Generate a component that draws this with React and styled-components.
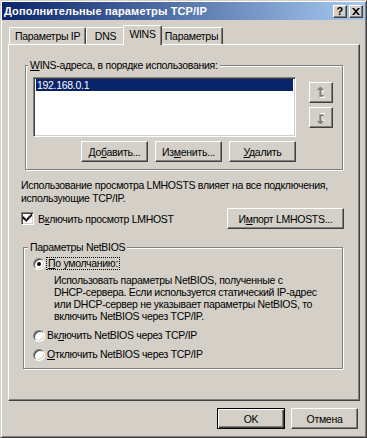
import React from "react";
import styled, { createGlobalStyle, css } from "styled-components";

const FACE = "#d4d0c8";
const FONT = `"Liberation Sans", Arial, sans-serif`;

const Global = createGlobalStyle`
  html, body { margin: 0; padding: 0; background: ${FACE}; }
  body { font-family: ${FONT}; font-size: 10.5px; letter-spacing: -0.3px; color: #000; }
  * { box-sizing: border-box; }
`;

const raised = css`
  border: 1px solid;
  border-color: #fff #404040 #404040 #fff;
  box-shadow: inset -1px -1px #808080;
`;

const sunken = css`
  border: 1px solid;
  border-color: #808080 #fff #fff #808080;
  box-shadow: inset 1px 1px #404040, inset -1px -1px ${FACE};
`;

const Window = styled.div`
  width: 367px;
  height: 438px;
  background: ${FACE};
  border: 1px solid;
  border-color: ${FACE} #404040 #404040 ${FACE};
  box-shadow: inset 1px 1px #fff, inset -1px -1px #808080;
  padding: 1px;
  display: flex;
  flex-direction: column;
`;

const TitleBar = styled.div`
  flex: none;
  height: 18px;
  display: flex;
  align-items: center;
  justify-content: space-between;
  padding: 0 2px 0 2px;
  background: linear-gradient(to right, #0a246a, #a6caf0);
  color: #fff;
  font-weight: bold;
  font-size: 11px;
  letter-spacing: 0.15px;
  white-space: nowrap;
`;

const TitleButtons = styled.div`
  display: flex;
  gap: 2px;
`;

const TitleButton = styled.div`
  width: 14px;
  height: 13px;
  ${raised};
  background: ${FACE};
  display: flex;
  align-items: center;
  justify-content: center;
  color: #000;
  font: bold 11px ${FONT};
  line-height: 1;
`;

const Body = styled.div`
  flex: 1;
  display: flex;
  flex-direction: column;
  padding: 0 5px 0 6px;
`;

const TabStrip = styled.div`
  flex: none;
  height: 24px;
  display: flex;
  align-items: flex-end;
  padding-left: 1px;
`;

const Tab = styled.div`
  position: relative;
  z-index: ${(p) => (p.$active ? 2 : 1)};
  flex: none;
  width: ${(p) => p.$w}px;
  height: ${(p) => (p.$active ? 20 : 17)}px;
  margin: 0 ${(p) => (p.$active ? -2 : 0)}px ${(p) => (p.$active ? -1 : 0)}px;
  background: ${FACE};
  border-top: 1px solid #fff;
  border-left: 1px solid #fff;
  border-right: 1px solid #404040;
  border-radius: 2px 2px 0 0;
  box-shadow: inset -1px 0 #808080;
  text-align: center;
  padding-top: 2px;
  line-height: 13px;
  white-space: nowrap;
`;

const Panel = styled.div`
  flex: none;
  height: 357px;
  border: 1px solid;
  border-color: #fff #404040 #404040 #fff;
  box-shadow: inset -1px -1px #808080;
  padding: 14px 15px 0 12px;
  display: flex;
  flex-direction: column;
`;

const Group = styled.fieldset`
  margin: ${(p) => p.$mt}px 1px 0 ${(p) => p.$ml}px;
  padding: ${(p) => p.$pad};
  border: 1px solid #808080;
  box-shadow: inset 1px 1px #fff, 1px 1px #fff;
  min-width: 0;
`;

const Legend = styled.legend`
  margin-left: -5px;
  padding: 0 2px;
  line-height: 13px;
  background: ${FACE};
  white-space: nowrap;
`;

const U = styled.span`
  text-decoration: underline;
`;

const AddrRow = styled.div`
  display: flex;
  gap: 13px;
`;

const AddrColumn = styled.div`
  display: flex;
  flex-direction: column;
  gap: 4px;
`;

const ListBox = styled.div`
  width: 263px;
  height: 60px;
  background: #fff;
  ${sunken};
  padding: 1px 2px;
`;

const ListItem = styled.div`
  height: 12px;
  line-height: 12px;
  padding-left: 1px;
  background: ${(p) => (p.$selected ? "#0a246a" : "transparent")};
  color: ${(p) => (p.$selected ? "#fff" : "#000")};
`;

const ArrowColumn = styled.div`
  display: flex;
  flex-direction: column;
  gap: 4px;
  padding-top: 5px;
`;

const Button = styled.button`
  flex: none;
  width: ${(p) => p.$w}px;
  height: ${(p) => p.$h || 21}px;
  padding: 0;
  background: ${FACE};
  ${raised};
  font: 10.5px ${FONT};
  letter-spacing: -0.3px;
  color: #000;
  display: flex;
  align-items: center;
  justify-content: center;
  white-space: nowrap;
  ${(p) =>
    p.$default &&
    css`
      border: 1px solid #000;
      box-shadow: inset 1px 1px #fff, inset -1px -1px #404040,
        inset -2px -2px #808080;
    `}
`;

const ButtonRow = styled.div`
  display: flex;
  justify-content: flex-end;
  gap: ${(p) => p.$gap}px;
`;

const Paragraph = styled.p`
  margin: ${(p) => p.$mt}px 0 0 0;
  line-height: ${(p) => p.$lh}px;
  padding-left: ${(p) => p.$pl || 0}px;
  white-space: nowrap;
`;

const CheckRow = styled.div`
  display: flex;
  align-items: center;
  justify-content: space-between;
  margin-top: 3px;
`;

const OptionLabel = styled.label`
  display: flex;
  align-items: center;
  gap: 4px;
  white-space: nowrap;
`;

const CheckBox = styled.span`
  flex: none;
  width: 13px;
  height: 13px;
  background: #fff;
  ${sunken};
  display: flex;
  align-items: center;
  justify-content: center;
`;

const Radio = styled.span`
  flex: none;
  width: 12px;
  height: 12px;
  border-radius: 50%;
  background: #fff;
  border: 1px solid;
  border-color: #808080 #fff #fff #808080;
  box-shadow: inset 1px 1px #404040, inset -1px -1px ${FACE};
  display: flex;
  align-items: center;
  justify-content: center;
  &::after {
    content: "";
    width: 4px;
    height: 4px;
    border-radius: 50%;
    background: ${(p) => (p.$checked ? "#000" : "transparent")};
  }
`;

const RadioRow = styled(OptionLabel)`
  margin-top: ${(p) => p.$mt}px;
  line-height: 13px;
  height: 13px;
  gap: ${(p) => (p.$focus ? 1 : 2)}px;
`;

const FocusText = styled.span`
  border: 1px dotted #000;
  padding: 0 1px;
  line-height: 11px;
`;

const Footer = styled.div`
  display: flex;
  justify-content: flex-end;
  gap: 6px;
  padding: 7px 2px 0 0;
`;

const ArrowIcon = styled.svg`
  flex: none;
  width: 10px;
  height: 12px;
  transform: ${(p) => (p.$down ? "scaleY(-1)" : "none")};
`;

const CloseIcon = () => (
  <svg width="8" height="7" viewBox="0 0 8 7">
    <path d="M0 0h2l2 2.3L6 0h2L5 3.5 8 7H6L4 4.7 2 7H0l3-3.5z" fill="#000" />
  </svg>
);

const ARROW = "M3 0h2v1h1v1h1v1H5v4h2v2H3V3H1V2h1V1h1z";

const MoveArrow = ({ down }) => (
  <ArrowIcon viewBox="0 0 9 11" $down={down}>
    <path d={ARROW} transform="translate(1 1)" fill="#fff" />
    <path d={ARROW} fill="#808080" />
  </ArrowIcon>
);

const Check = () => (
  <svg width="9" height="9" viewBox="0 0 7 7">
    <path d="M0 2h1v1h1v1h1V3h1V2h1V1h1V0h1v2H6v1H5v1H4v1H3v1H2V5H1V4H0z" fill="#000" />
  </svg>
);

export default function App() {
  return (
    <>
      <Global />
      <Window>
        <TitleBar>
          <span>Дополнительные параметры TCP/IP</span>
          <TitleButtons>
            <TitleButton>?</TitleButton>
            <TitleButton>
              <CloseIcon />
            </TitleButton>
          </TitleButtons>
        </TitleBar>
        <Body>
          <TabStrip>
            <Tab $w={77}>Параметры IP</Tab>
            <Tab $w={39}>DNS</Tab>
            <Tab $w={39} $active>
              WINS
            </Tab>
            <Tab $w={63}>Параметры</Tab>
          </TabStrip>
          <Panel>
            <Group $mt={0} $ml={4} $pad="5px 9px 7px 7px">
              <Legend>
                <U>W</U>INS-адреса, в порядке использования:
              </Legend>
              <AddrRow>
                <AddrColumn>
                  <ListBox>
                    <ListItem $selected>192.168.0.1</ListItem>
                  </ListBox>
                  <ButtonRow $gap={7}>
                    <Button $w={67}>
                      <span>
                        До<U>б</U>авить...
                      </span>
                    </Button>
                    <Button $w={67}>
                      <span>
                        Из<U>м</U>енить...
                      </span>
                    </Button>
                    <Button $w={67}>
                      <span>
                        <U>У</U>далить
                      </span>
                    </Button>
                  </ButtonRow>
                </AddrColumn>
                <ArrowColumn>
                  <Button $w={24} $h={21}>
                    <MoveArrow />
                  </Button>
                  <Button $w={24} $h={21}>
                    <MoveArrow down />
                  </Button>
                </ArrowColumn>
              </AddrRow>
            </Group>
            <Paragraph $mt={9} $lh={13}>
              Использование просмотра LMHOSTS влияет на все подключения,
              <br />
              использующие TCP/IP.
            </Paragraph>
            <CheckRow>
              <OptionLabel>
                <CheckBox>
                  <Check />
                </CheckBox>
                <span>
                  В<U>к</U>лючить просмотр LMHOST
                </span>
              </OptionLabel>
              <Button $w={117}>
                <span>
                  И<U>м</U>порт LMHOSTS...
                </span>
              </Button>
            </CheckRow>
            <Group $mt={12} $ml={2} $pad="3px 9px 7px 9px">
              <Legend>Параметры NetBIOS</Legend>
              <RadioRow $mt={0} $focus>
                <Radio $checked />
                <FocusText>
                  <U>П</U>о умолчанию:
                </FocusText>
              </RadioRow>
              <Paragraph $mt={4} $lh={12} $pl={21}>
                Использовать параметры NetBIOS, полученные с
                <br />
                DHCP-сервера. Если используется статический IP-адрес
                <br />
                или DHCP-сервер не указывает параметры NetBIOS, то
                <br />
                включить NetBIOS через TCP/IP.
              </Paragraph>
              <RadioRow $mt={7}>
                <Radio />
                <span>
                  Вк<U>л</U>ючить NetBIOS через TCP/IP
                </span>
              </RadioRow>
              <RadioRow $mt={6}>
                <Radio />
                <span>
                  <U>О</U>тключить NetBIOS через TCP/IP
                </span>
              </RadioRow>
            </Group>
          </Panel>
          <Footer>
            <Button $w={68} $default>
              OK
            </Button>
            <Button $w={67}>Отмена</Button>
          </Footer>
        </Body>
      </Window>
    </>
  );
}
